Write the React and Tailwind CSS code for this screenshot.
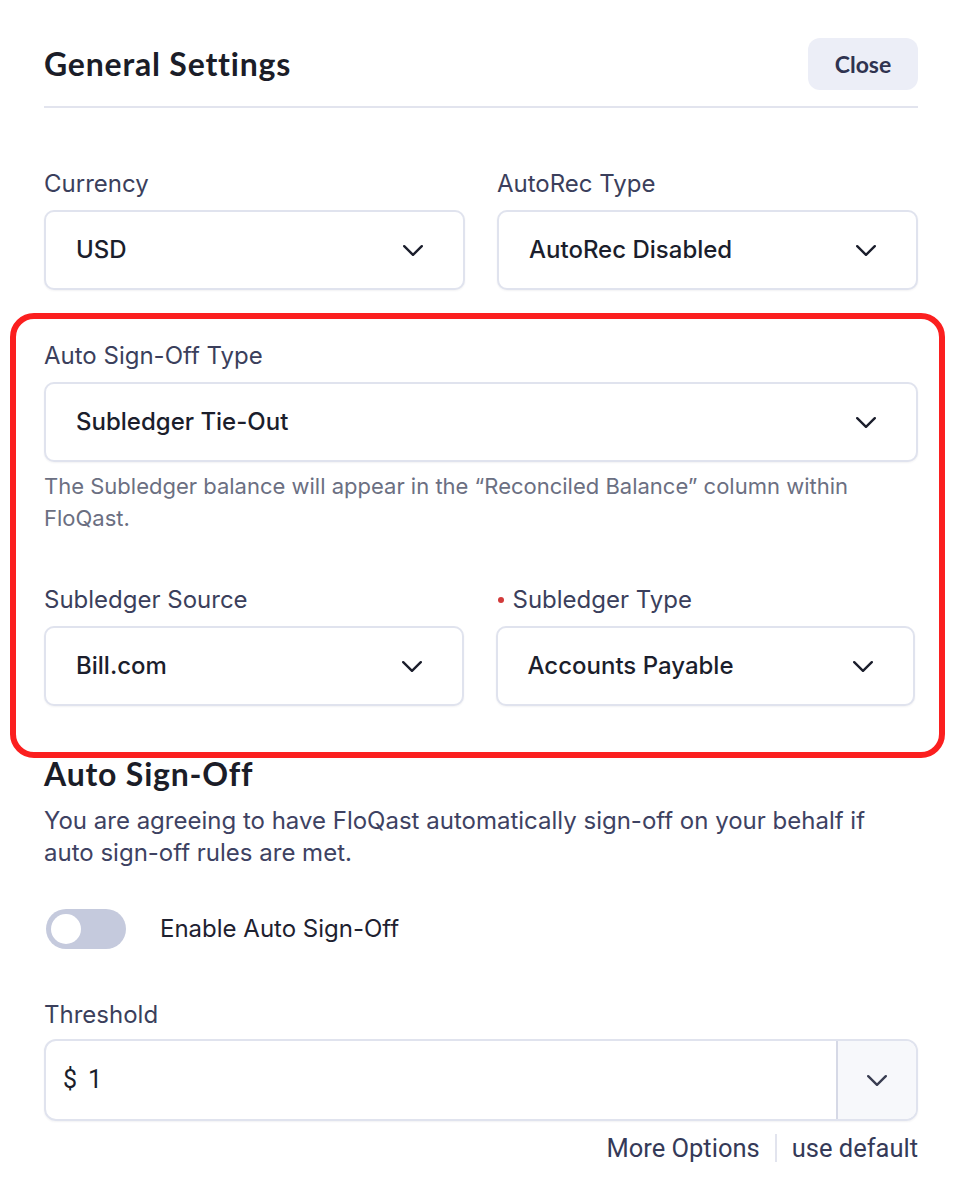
import { useState } from 'react';

const Chevron = ({ className = '' }) => (
  <svg width="20" height="11" viewBox="0 0 20 11" fill="none" className={className}>
    <path d="M1.2 1.2 L10 9.8 L18.8 1.2" stroke="currentColor" strokeWidth="2.4" strokeLinecap="round" strokeLinejoin="round" />
  </svg>
);

function Select({ value }) {
  return (
    <div className="flex h-[80px] items-center justify-between rounded-[10px] border-2 border-[#e0e3ee] bg-white pl-[30px] pr-[40px] shadow-[0_1px_2px_rgba(30,35,60,0.06)]">
      <span className="text-[24px] font-medium text-[#1b1e2c]">{value}</span>
      <Chevron className="text-[#1b1e2c]" />
    </div>
  );
}

function Field({ label, value, required }) {
  return (
    <div className="flex flex-col">
      <label className="mb-[11px] flex h-[30px] items-center text-[24px] leading-[30px] text-[#3b3f5c]">
        {required && <span className="mr-[9px] ml-[2px] h-[6px] w-[6px] rounded-full bg-[#d23a3a]" />}
        {label}
      </label>
      <Select value={value} />
    </div>
  );
}

export default function App() {
  const [enabled, setEnabled] = useState(false);

  return (
    <div className="min-h-[1184px] bg-white px-[44px] pt-[38px] font-['Inter',sans-serif]">
      {/* Header */}
      <div className="flex items-center justify-between pb-[16px] border-b-2 border-[#e2e4ee]">
        <h1 className="font-['Lato',sans-serif] text-[32px] font-bold tracking-[0.8px] text-[#1b1d28]">General Settings</h1>
        <button className="h-[52px] w-[110px] rounded-[12px] bg-[#eceef7] text-[23px] font-bold text-[#2f3350] font-['Lato',sans-serif]">
          Close
        </button>
      </div>

      {/* Currency / AutoRec */}
      <div className="mt-[61px] grid grid-cols-2 gap-[32px]">
        <Field label="Currency" value="USD" />
        <Field label="AutoRec Type" value="AutoRec Disabled" />
      </div>

      {/* Highlighted section */}
      <div className="ml-[-34px] mr-[-27px] mt-[23px] rounded-[24px] border-[6px] border-[#fb1f1f] pl-[28px] pr-[21px] pt-[22px] pb-[46px]">
        <Field label="Auto Sign-Off Type" value="Subledger Tie-Out" />
        <p className="mt-[8px] text-[22px] leading-[32px] text-[#6b6f82]">
          The Subledger balance will appear in the “Reconciled Balance” column within FloQast.
        </p>
        <div className="mt-[51px] grid grid-cols-2 gap-[32px] pr-[3px]">
          <Field label="Subledger Source" value="Bill.com" />
          <Field label="Subledger Type" value="Accounts Payable" required />
        </div>
      </div>

      {/* Auto Sign-Off */}
      <h2 className="mt-[-2px] font-['Lato',sans-serif] text-[32px] font-bold tracking-[0.8px] leading-[36px] text-[#1b1d28]">Auto Sign-Off</h2>
      <p className="mt-[13px] text-[24px] leading-[32px] text-[#3e4262]">
        You are agreeing to have FloQast automatically sign-off on your behalf if auto sign-off rules are met.
      </p>

      <div className="mt-[40px] flex items-center">
        <button
          onClick={() => setEnabled(!enabled)}
          className={`ml-[2px] flex h-[40px] w-[80px] items-center rounded-full px-[5px] ${enabled ? 'justify-end bg-[#4b5fd6]' : 'justify-start bg-[#c5cadd]'}`}
        >
          <span className="h-[30px] w-[30px] rounded-full bg-white" />
        </button>
        <span className="ml-[34px] text-[24px] text-[#1e2130]">Enable Auto Sign-Off</span>
      </div>

      {/* Threshold */}
      <label className="mt-[51px] block text-[24px] leading-[30px] text-[#3b3f5c]">Threshold</label>
      <div className="mt-[9px] flex h-[82px] overflow-hidden rounded-[12px] border-2 border-[#e0e3ee] shadow-[0_1px_2px_rgba(30,35,60,0.06)]">
        <div className="flex flex-1 items-center pl-[17px] font-['Roboto',sans-serif] text-[25px] text-[#1b1e2c]">
          <span>$</span>
          <span className="ml-[11px]">1</span>
        </div>
        <div className="flex w-[80px] items-center justify-center border-l-2 border-[#d6d9e6] bg-[#f7f8fb]">
          <Chevron className="text-[#3a3e52]" />
        </div>
      </div>
      <div className="mt-[12px] flex h-[30px] items-center justify-end font-['Roboto',sans-serif] text-[25.5px] text-[#353a58]">
        <span>More Options</span>
        <span className="mx-[15px] h-[28px] w-[2px] bg-[#e2e4ee]" />
        <span>use default</span>
      </div>
    </div>
  );
}
